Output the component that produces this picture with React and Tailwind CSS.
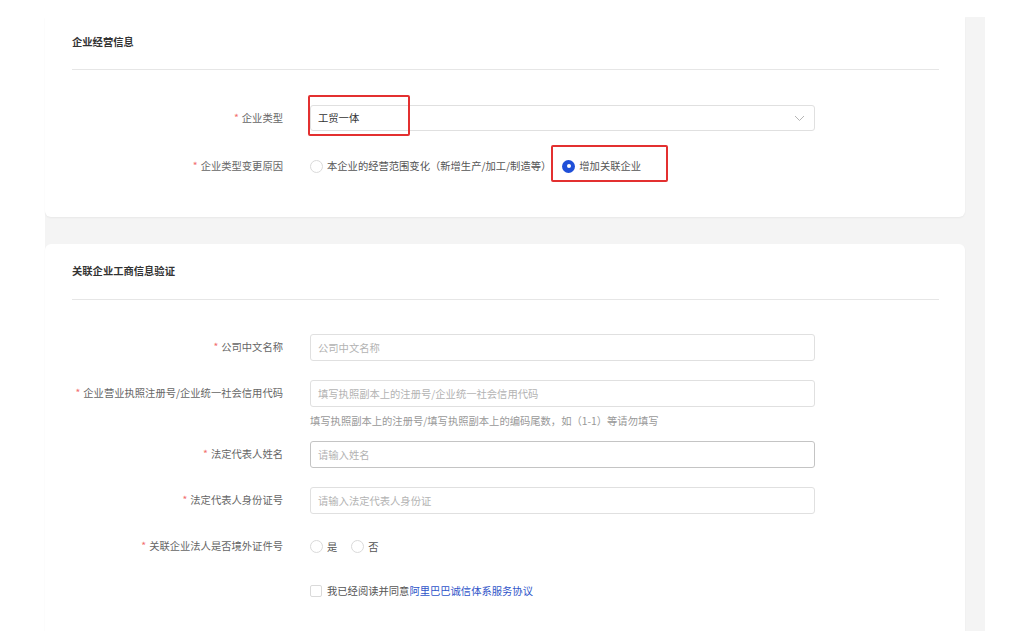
import React from "react";

const font = { fontFamily: '"Noto Sans CJK SC", "Noto Sans", sans-serif' };

function Label({ children }) {
  return (
    <div className="w-[211px] shrink-0 text-right text-[10.3px] text-[#666] leading-none">
      <span className="text-[#f26d6d] mr-[3px]">*</span>
      {children}
    </div>
  );
}

function Radio({ checked }) {
  if (checked) {
    return (
      <span className="w-[13px] h-[13px] rounded-full bg-[#1f4fd8] flex items-center justify-center shrink-0">
        <span className="w-[4px] h-[4px] rounded-full bg-white" />
      </span>
    );
  }
  return <span className="w-[13px] h-[13px] rounded-full border border-[#dadada] bg-white shrink-0" />;
}

function Input({ placeholder, dark }) {
  return (
    <div
      className={`w-[505px] h-[27px] rounded-[3px] border bg-white flex items-center px-[7px] text-[10.3px] text-[#b3b3b3] ${
        dark ? "border-[#c4c4c4]" : "border-[#e0e0e0]"
      }`}
    >
      {placeholder}
    </div>
  );
}

function Row({ label, children, className = "" }) {
  return (
    <div className={`flex items-center ${className}`}>
      <Label>{label}</Label>
      <div className="ml-[27px] flex items-center">{children}</div>
    </div>
  );
}

export default function App() {
  return (
    <div className="w-[1024px] h-[631px] bg-white overflow-hidden pt-[17px] pl-[45px]" style={font}>
      <div className="w-[940px] h-[614px] bg-[#f4f4f4] pr-[20px]">
        {/* Card 1 */}
        <div className="w-[920px] h-[200px] bg-white rounded-b-[6px] shadow-[0_1px_2px_rgba(0,0,0,0.05)] pl-[27px] pr-[26px]">
          <div className="h-[53px] pb-[2px] flex items-center border-b border-[#e6e6e6] text-[10.3px] font-bold text-[#333]">
            企业经营信息
          </div>
          <Row label="企业类型" className="mt-[35px] h-[26px]">
            <div className="relative w-[505px] h-[26px] rounded-[3px] border border-[#e0e0e0] bg-white flex items-center justify-between px-[7px] text-[10.3px] text-[#333]">
              <span>工贸一体</span>
              <svg width="11" height="7" viewBox="0 0 11 7" className="mr-[2px]">
                <polyline points="1,1 5.5,5.5 10,1" fill="none" stroke="#b5b5b5" strokeWidth="1" />
              </svg>
              <div className="absolute left-[-3px] top-[-11px] w-[102px] h-[41px] border-2 border-[#e33030] rounded-[2px]" />
            </div>
          </Row>
          <Row label="企业类型变更原因" className="mt-[22px] h-[26px]">
            <div className="flex items-center text-[10.3px] text-[#555]">
              <Radio />
              <span className="ml-[4px]">本企业的经营范围变化（新增生产/加工/制造等）</span>
            </div>
            <div className="relative ml-[11px] h-[26px] flex items-center text-[10.3px] text-[#555]">
              <Radio checked />
              <span className="ml-[4px]">增加关联企业</span>
              <div className="absolute left-[-11px] top-[-8px] w-[117px] h-[37px] border-2 border-[#e33030] rounded-[2px]" />
            </div>
          </Row>
        </div>

        {/* Card 2 */}
        <div className="mt-[27px] w-[920px] h-[400px] bg-white rounded-t-[6px] shadow-[0_1px_2px_rgba(0,0,0,0.05)] pl-[27px] pr-[26px]">
          <div className="h-[56px] pb-[2px] flex items-center border-b border-[#e6e6e6] text-[10.3px] font-bold text-[#333]">
            关联企业工商信息验证
          </div>
          <Row label="公司中文名称" className="mt-[34px] h-[27px]">
            <Input placeholder="公司中文名称" />
          </Row>
          <Row label="企业营业执照注册号/企业统一社会信用代码" className="mt-[19px] h-[27px]">
            <Input placeholder="填写执照副本上的注册号/企业统一社会信用代码" />
          </Row>
          <div className="ml-[238px] mt-[7px] h-[14px] flex items-center text-[10.3px] text-[#999]">
            填写执照副本上的注册号/填写执照副本上的编码尾数，如（1-1）等请勿填写
          </div>
          <Row label="法定代表人姓名" className="mt-[13px] h-[27px]">
            <Input placeholder="请输入姓名" dark />
          </Row>
          <Row label="法定代表人身份证号" className="mt-[19px] h-[27px]">
            <Input placeholder="请输入法定代表人身份证" />
          </Row>
          <Row label="关联企业法人是否境外证件号" className="mt-[19px] h-[27px]">
            <div className="flex items-center text-[10.3px] text-[#555]">
              <Radio />
              <span className="ml-[4px]">是</span>
              <span className="ml-[14px]" />
              <Radio />
              <span className="ml-[4px]">否</span>
            </div>
          </Row>
          <div className="ml-[238px] mt-[17px] h-[27px] flex items-center text-[10.3px] text-[#555]">
            <span className="w-[12px] h-[12px] border border-[#dadada] rounded-[2px] bg-white shrink-0" />
            <span className="ml-[5px]">我已经阅读并同意</span>
            <span className="text-[#2f55c9]">阿里巴巴诚信体系服务协议</span>
          </div>
        </div>
      </div>
    </div>
  );
}
